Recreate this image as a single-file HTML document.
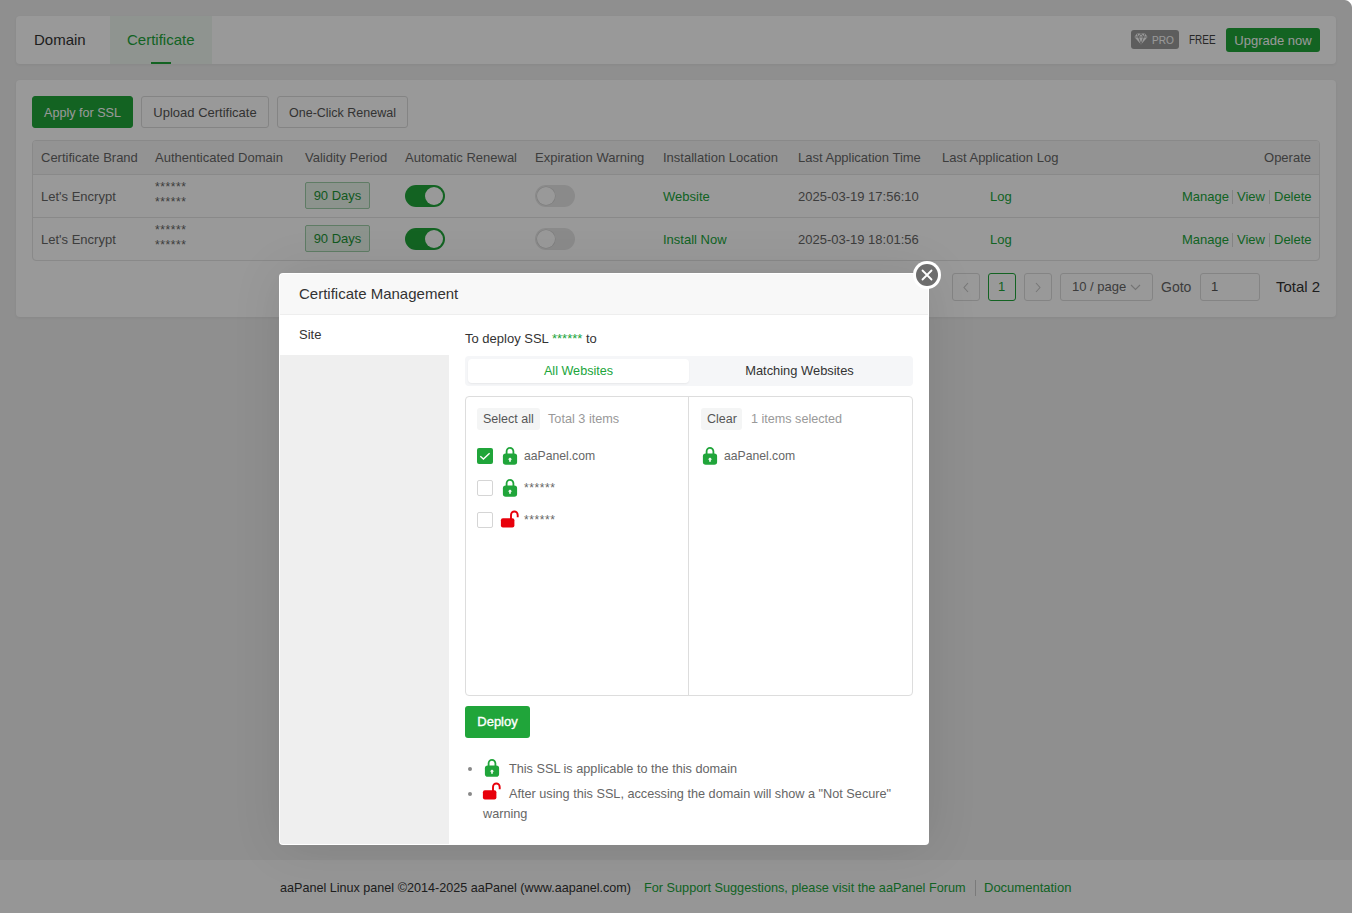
<!DOCTYPE html>
<html><head><meta charset="utf-8">
<style>
*{box-sizing:border-box;margin:0;padding:0}
html,body{width:1352px;height:913px;overflow:hidden}
body{position:relative;background:#eeeeee;font-family:"Liberation Sans",sans-serif;color:#333;font-size:13px}
.a{position:absolute;white-space:nowrap}
.card{position:absolute;background:#fff;border-radius:4px;box-shadow:0 1px 3px rgba(0,0,0,0.05)}
.btn{position:absolute;border:1px solid #dddddd;border-radius:3px;background:#fff;color:#555;font-size:13px;text-align:center;line-height:32px}
.th{position:absolute;top:150px;color:#666;font-size:13px;line-height:16px}
.td{position:absolute;color:#666;font-size:13px;line-height:16px}
.badge{position:absolute;width:65px;height:27px;border:1px solid #9fcfa9;background:#eaf5ec;color:#1d9435;border-radius:2px;text-align:center;line-height:25px;font-size:13px}
.sw{position:absolute;width:40px;height:22px;border-radius:11px}
.sw.on{background:#20a53a}
.sw.off{background:#e6e6e6}
.sw.off i{box-shadow:0 0 0 0.5px #d0d0d0}
.sw i{position:absolute;top:2px;width:18px;height:18px;border-radius:50%;background:#fff}
.sw.on i{left:20px}
.sw.off i{left:2px}
.sep{position:absolute;width:1px;height:14px;background:#ddd}
.pg{position:absolute;top:273px;height:28px;border:1px solid #dddddd;border-radius:3px;background:#fff}
.g{color:#20a53a !important}
#shade{position:absolute;left:0;top:0;width:1352px;height:913px;background:rgba(0,0,0,0.4)}
#modal{position:absolute;left:279px;top:273px;width:650px;height:572px;background:#fff;border-radius:4px;overflow:hidden}
</style></head><body>

<!-- top card -->
<div class="card" style="left:16px;top:16px;width:1320px;height:48px"></div>
<div class="a" style="left:110px;top:16px;width:102px;height:48px;background:#eef7f0"></div>
<div class="a" style="left:34px;top:31px;font-size:15px;color:#333;line-height:18px">Domain</div>
<div class="a g" style="left:127px;top:31px;font-size:15px;line-height:18px">Certificate</div>
<div class="a" style="left:151px;top:62px;width:20px;height:2px;background:#20a53a"></div>
<div class="a" style="left:1131px;top:30px;width:48px;height:19px;background:#9c9c9c;border-radius:3px"></div>
<svg class="a" style="left:1134px;top:33px" width="14" height="12" viewBox="0 0 14 12"><path d="M3 0.5H11L13.6 4L7 11.6L0.4 4Z" fill="#fff"/><path d="M0.4 4H13.6M4.5 4L7 11M9.5 4L7 11M3 0.5L4.5 4L7 0.5L9.5 4L11 0.5" stroke="#9c9c9c" stroke-width="0.9" fill="none"/></svg>
<div class="a" style="left:1152px;top:33px;font-size:11px;color:#fff;line-height:14px;transform:scaleX(0.92);transform-origin:left">PRO</div>
<div class="a" style="left:1189px;top:33px;font-size:12px;color:#444;line-height:15px;transform:scaleX(0.83);transform-origin:left">FREE</div>
<div class="a" style="left:1226px;top:28px;width:94px;height:24px;background:#20a53a;border-radius:3px;color:#fff;font-size:13px;line-height:25px;text-align:center">Upgrade now</div>

<!-- main card -->
<div class="card" style="left:16px;top:80px;width:1320px;height:237px"></div>
<div class="btn" style="left:32px;top:96px;width:101px;height:32px;background:#20a53a;border-color:#20a53a;color:#fff;font-size:12.6px">Apply for SSL</div>
<div class="btn" style="left:141px;top:96px;width:128px;height:32px">Upload Certificate</div>
<div class="btn" style="left:277px;top:96px;width:131px;height:32px;font-size:12.5px">One-Click Renewal</div>

<!-- table -->
<div class="a" style="left:32px;top:140px;width:1288px;height:121px;border:1px solid #e4e4e4;border-radius:4px;overflow:hidden">
  <div class="a" style="left:0;top:0;width:1288px;height:34px;background:#f6f6f6;border-bottom:1px solid #e4e4e4"></div>
  <div class="a" style="left:0;top:76px;width:1288px;height:1px;background:#e4e4e4"></div>
</div>
<div class="th" style="left:41px">Certificate Brand</div>
<div class="th" style="left:155px">Authenticated Domain</div>
<div class="th" style="left:305px">Validity Period</div>
<div class="th" style="left:405px">Automatic Renewal</div>
<div class="th" style="left:535px">Expiration Warning</div>
<div class="th" style="left:663px">Installation Location</div>
<div class="th" style="left:798px">Last Application Time</div>
<div class="th" style="left:942px">Last Application Log</div>
<div class="th" style="right:41px">Operate</div>

<!-- row1 -->
<div class="td" style="left:41px;top:189px">Let's Encrypt</div>
<div class="td" style="left:155px;top:180px;font-size:12px;letter-spacing:0.6px;line-height:15px">******<br>******</div>
<div class="badge" style="left:305px;top:182px">90 Days</div>
<div class="sw on" style="left:405px;top:185px"><i></i></div>
<div class="sw off" style="left:535px;top:185px"><i></i></div>
<div class="td g" style="left:663px;top:189px">Website</div>
<div class="td" style="left:798px;top:189px">2025-03-19 17:56:10</div>
<div class="td g" style="left:990px;top:189px">Log</div>
<div class="td g" style="left:1182px;top:189px">Manage</div>
<div class="sep" style="left:1232px;top:190px"></div>
<div class="td g" style="left:1237px;top:189px">View</div>
<div class="sep" style="left:1269px;top:190px"></div>
<div class="td g" style="left:1274px;top:189px">Delete</div>

<!-- row2 -->
<div class="td" style="left:41px;top:232px">Let's Encrypt</div>
<div class="td" style="left:155px;top:223px;font-size:12px;letter-spacing:0.6px;line-height:15px">******<br>******</div>
<div class="badge" style="left:305px;top:225px">90 Days</div>
<div class="sw on" style="left:405px;top:228px"><i></i></div>
<div class="sw off" style="left:535px;top:228px"><i></i></div>
<div class="td g" style="left:663px;top:232px">Install Now</div>
<div class="td" style="left:798px;top:232px">2025-03-19 18:01:56</div>
<div class="td g" style="left:990px;top:232px">Log</div>
<div class="td g" style="left:1182px;top:232px">Manage</div>
<div class="sep" style="left:1232px;top:233px"></div>
<div class="td g" style="left:1237px;top:232px">View</div>
<div class="sep" style="left:1269px;top:233px"></div>
<div class="td g" style="left:1274px;top:232px">Delete</div>

<!-- pagination -->
<div class="pg" style="left:952px;width:28px"></div>
<svg class="a" style="left:962px;top:282px" width="8" height="11" viewBox="0 0 8 11"><path d="M6 1L2 5.5L6 10" stroke="#c8c8c8" stroke-width="1.1" fill="none"/></svg>
<div class="pg" style="left:988px;width:28px;border-color:#20a53a"></div>
<div class="a g" style="left:998px;top:279px;font-size:13px;line-height:16px">1</div>
<div class="pg" style="left:1024px;width:28px"></div>
<svg class="a" style="left:1034px;top:282px" width="8" height="11" viewBox="0 0 8 11"><path d="M2 1L6 5.5L2 10" stroke="#c8c8c8" stroke-width="1.1" fill="none"/></svg>
<div class="pg" style="left:1060px;width:93px"></div>
<svg class="a" style="left:1130px;top:283px" width="11" height="8" viewBox="0 0 11 8"><path d="M1 2L5.5 6.5L10 2" stroke="#c0c0c0" stroke-width="1.1" fill="none"/></svg>
<div class="a" style="left:1072px;top:279px;font-size:13px;color:#666;line-height:16px">10 / page</div>
<div class="a" style="left:1161px;top:279px;font-size:14px;color:#666;line-height:16px">Goto</div>
<div class="pg" style="left:1200px;width:60px"></div>
<div class="a" style="left:1211px;top:279px;font-size:13px;color:#555;line-height:16px">1</div>
<div class="a" style="left:1276px;top:278px;font-size:15px;color:#333;line-height:18px">Total 2</div>

<!-- footer -->
<div class="a" style="left:0;top:860px;width:1352px;height:53px;background:#fafafa"></div>
<div class="a" style="left:280px;top:880px;font-size:12.6px;color:#333;line-height:16px">aaPanel Linux panel ©2014-2025 aaPanel (www.aapanel.com)</div>
<div class="a g" style="left:644px;top:880px;font-size:12.7px;line-height:16px">For Support Suggestions, please visit the aaPanel Forum</div>
<div class="a" style="left:975px;top:880px;width:1px;height:16px;background:#ccc"></div>
<div class="a g" style="left:984px;top:880px;font-size:13px;line-height:16px">Documentation</div>

<div id="shade"></div>

<!-- modal -->
<div id="modal" style="box-shadow:1px 1px 50px rgba(0,0,0,0.1)"></div>
<div class="a" style="left:280px;top:274px;width:648px;height:41px;background:#f8f8f8;border-bottom:1px solid #eee;border-radius:3px 3px 0 0"></div>
<div class="a" style="left:299px;top:285px;font-size:15px;color:#333;line-height:18px">Certificate Management</div>
<div class="a" style="left:280px;top:315px;width:169px;height:529px;background:#efefef;border-bottom-left-radius:3px"></div>
<div class="a" style="left:280px;top:315px;width:169px;height:40px;background:#fff"></div>
<div class="a" style="left:299px;top:327px;font-size:13px;color:#333;line-height:16px">Site</div>
<!-- close -->
<div class="a" style="left:913px;top:261px;width:28px;height:28px;border-radius:50%;background:#fff"></div>
<div class="a" style="left:916px;top:264px;width:22px;height:22px;border-radius:50%;background:#6d6d6d"></div>
<svg class="a" style="left:916px;top:264px" width="22" height="22" viewBox="0 0 22 22"><path d="M6.5 6.5L15.5 15.5M15.5 6.5L6.5 15.5" stroke="#fff" stroke-width="1.8" stroke-linecap="round"/></svg>

<div class="a" style="left:465px;top:331px;font-size:13px;color:#333;line-height:16px">To deploy SSL <span class="g">******</span> to</div>
<div class="a" style="left:465px;top:356px;width:448px;height:30px;background:#f5f6f8;border-radius:4px"></div>
<div class="a" style="left:468px;top:359px;width:221px;height:24px;background:#fff;border-radius:4px;box-shadow:0 1px 2px rgba(0,0,0,0.06)"></div>
<div class="a g" style="left:468px;top:363px;width:221px;text-align:center;font-size:12.6px;line-height:16px">All Websites</div>
<div class="a" style="left:689px;top:363px;width:221px;text-align:center;font-size:12.9px;color:#333;line-height:16px">Matching Websites</div>

<div class="a" style="left:465px;top:396px;width:448px;height:300px;border:1px solid #dddddd;border-radius:4px"></div>
<div class="a" style="left:688px;top:397px;width:1px;height:298px;background:#dddddd"></div>
<div class="a" style="left:477px;top:408px;width:63px;height:22px;background:#f4f5f5;border-radius:3px"></div>
<div class="a" style="left:483px;top:411px;font-size:12.5px;color:#555;line-height:16px">Select all</div>
<div class="a" style="left:548px;top:411px;font-size:12.7px;color:#999;line-height:16px">Total 3 items</div>
<div class="a" style="left:701px;top:408px;width:41px;height:22px;background:#f4f5f5;border-radius:3px"></div>
<div class="a" style="left:707px;top:411px;font-size:12.5px;color:#555;line-height:16px">Clear</div>
<div class="a" style="left:751px;top:411px;font-size:12.6px;color:#999;line-height:16px">1 items selected</div>

<!-- items -->
<svg class="a" style="left:477px;top:448px" width="16" height="16" viewBox="0 0 16 16"><rect x="0" y="0" width="16" height="16" rx="2" fill="#20a53a"/><path d="M3.3 8.2L6.4 11L12.6 5.2" stroke="#fff" stroke-width="1.4" fill="none"/></svg>
<div class="a" style="left:477px;top:480px;width:16px;height:16px;border:1px solid #d5d5d5;border-radius:2px;background:#fff"></div>
<div class="a" style="left:477px;top:512px;width:16px;height:16px;border:1px solid #d5d5d5;border-radius:2px;background:#fff"></div>
<svg class="a lk" style="left:502px;top:446px" width="16" height="19" viewBox="0 0 16 19"><path d="M4.6 9V5.2a3.4 3.4 0 0 1 6.8 0V9" stroke="#20a53a" stroke-width="1.8" fill="none"/><rect x="0.9" y="7.6" width="14.2" height="11.2" rx="2.8" fill="#20a53a"/><path d="M8 11.4L10.2 13.6H8.8V15.8H7.2V13.6H5.8Z" fill="#fff"/></svg>
<svg class="a lk" style="left:502px;top:478px" width="16" height="19" viewBox="0 0 16 19"><path d="M4.6 9V5.2a3.4 3.4 0 0 1 6.8 0V9" stroke="#20a53a" stroke-width="1.8" fill="none"/><rect x="0.9" y="7.6" width="14.2" height="11.2" rx="2.8" fill="#20a53a"/><path d="M8 11.4L10.2 13.6H8.8V15.8H7.2V13.6H5.8Z" fill="#fff"/></svg>
<svg class="a" style="left:500px;top:510px" width="20" height="19" viewBox="0 0 20 19"><path d="M11 9V4.9a3.35 3.35 0 0 1 6.7 0V7.2" stroke="#e8000b" stroke-width="1.9" fill="none"/><rect x="0.9" y="8.2" width="13.5" height="9.4" rx="2" fill="#e8000b"/></svg>
<div class="a" style="left:524px;top:448px;font-size:12.2px;color:#666;line-height:16px">aaPanel.com</div>
<div class="a" style="left:524px;top:481px;font-size:12px;letter-spacing:0.6px;color:#666;line-height:14px">******</div>
<div class="a" style="left:524px;top:513px;font-size:12px;letter-spacing:0.6px;color:#666;line-height:14px">******</div>
<svg class="a lk" style="left:702px;top:446px" width="16" height="19" viewBox="0 0 16 19"><path d="M4.6 9V5.2a3.4 3.4 0 0 1 6.8 0V9" stroke="#20a53a" stroke-width="1.8" fill="none"/><rect x="0.9" y="7.6" width="14.2" height="11.2" rx="2.8" fill="#20a53a"/><path d="M8 11.4L10.2 13.6H8.8V15.8H7.2V13.6H5.8Z" fill="#fff"/></svg>
<div class="a" style="left:724px;top:448px;font-size:12.2px;color:#666;line-height:16px">aaPanel.com</div>

<div class="a" style="left:465px;top:706px;width:65px;height:32px;background:#20a53a;border-radius:3px;color:#fff;font-size:13px;line-height:32px;text-align:center;-webkit-text-stroke:0.35px #fff">Deploy</div>

<div class="a" style="left:468px;top:767px;width:4px;height:4px;border-radius:50%;background:#888"></div>
<svg class="a lk" style="left:484px;top:758px" width="16" height="19" viewBox="0 0 16 19"><path d="M4.6 9V5.2a3.4 3.4 0 0 1 6.8 0V9" stroke="#20a53a" stroke-width="1.8" fill="none"/><rect x="0.9" y="7.6" width="14.2" height="11.2" rx="2.8" fill="#20a53a"/><path d="M8 11.4L10.2 13.6H8.8V15.8H7.2V13.6H5.8Z" fill="#fff"/></svg>
<div class="a" style="left:509px;top:761px;font-size:12.7px;color:#666;line-height:16px">This SSL is applicable to the this domain</div>
<div class="a" style="left:468px;top:792px;width:4px;height:4px;border-radius:50%;background:#888"></div>
<svg class="a" style="left:482px;top:782px" width="20" height="19" viewBox="0 0 20 19"><path d="M11 9V4.9a3.35 3.35 0 0 1 6.7 0V7.2" stroke="#e8000b" stroke-width="1.9" fill="none"/><rect x="0.9" y="8.2" width="13.5" height="9.4" rx="2" fill="#e8000b"/></svg>
<div class="a" style="left:509px;top:786px;font-size:12.7px;color:#666;line-height:16px">After using this SSL, accessing the domain will show a "Not Secure"</div>
<div class="a" style="left:483px;top:806px;font-size:12.7px;color:#666;line-height:16px">warning</div>


<div class="a" style="left:1344px;top:0;width:8px;height:8px;background:radial-gradient(circle at 0 100%, transparent 7.5px, #fff 8.5px)"></div>
</body></html>
